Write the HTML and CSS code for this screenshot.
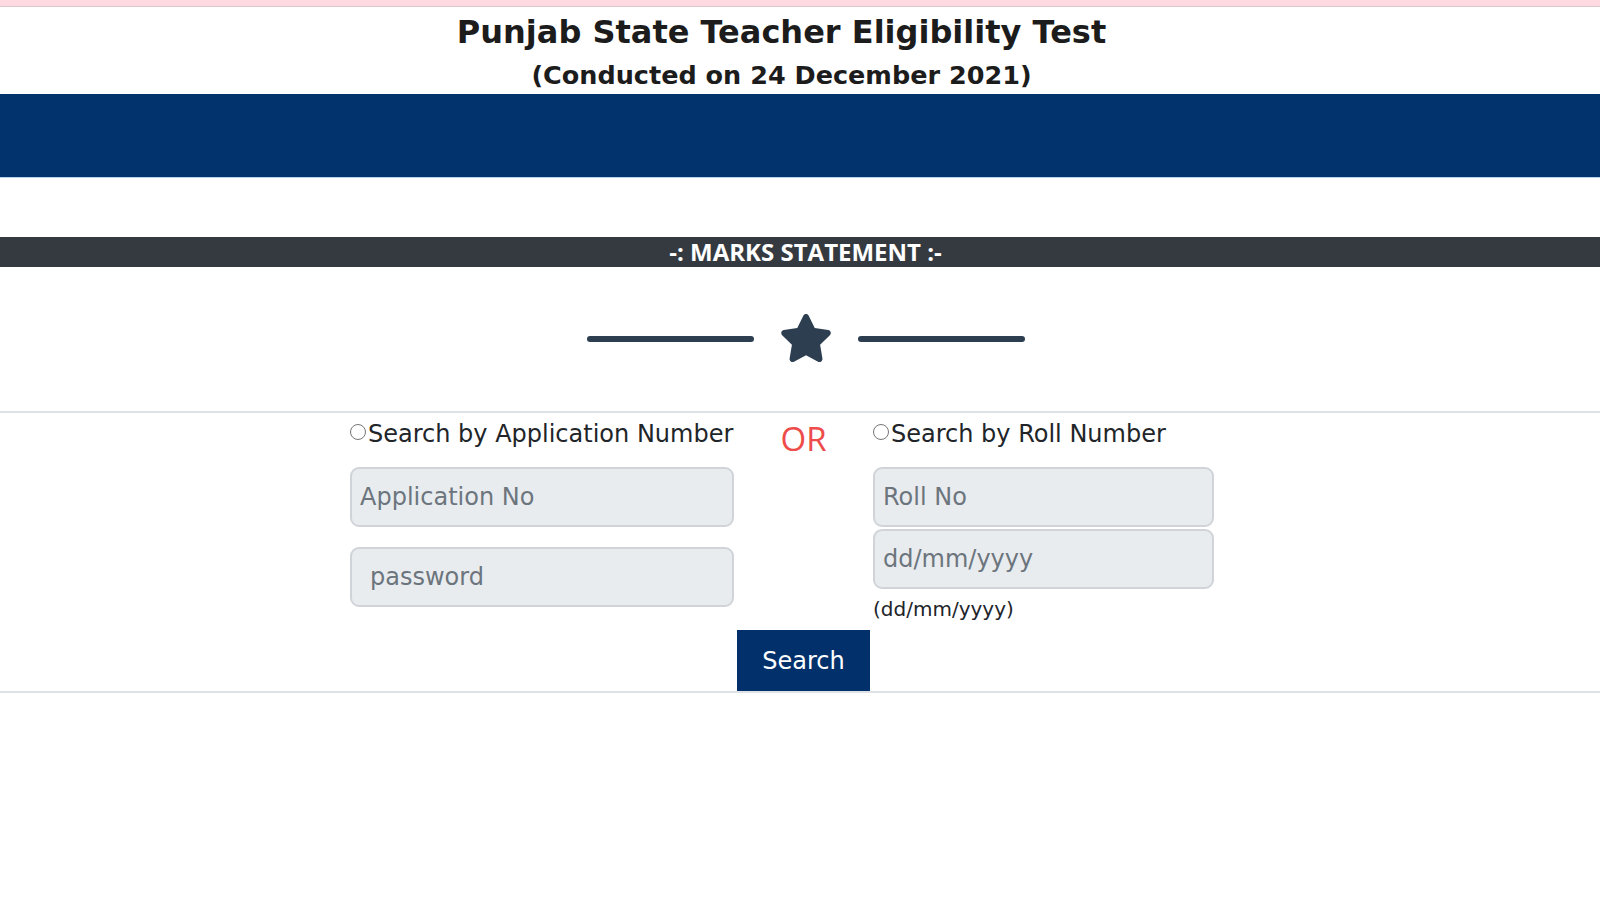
FILE: index.html
```html
<!DOCTYPE html>
<html>
<head>
<meta charset="utf-8" />
<title>Punjab State Teacher Eligibility Test</title>
<link rel="stylesheet" href="styles.css">
</head>
<body>
	<div class="topbar"></div>
	<div class="head">
		<h1>Punjab State Teacher Eligibility Test</h1>
		<p>(Conducted on 24 December 2021)</p>
	</div>
	<div class="banner"></div>

	<div class="section-bar">-: MARKS STATEMENT :-</div>

	<div class="divider">
		<span class="divider-line"></span>
		<svg class="divider-icon" viewBox="0 0 576 512" width="54" height="48">
			<path fill="#2c3e50" d="M316.9 18C311.6 7 300.4 0 288.1 0s-23.4 7-28.8 18L195 150.3 51.4 171.5c-12 1.8-22 10.2-25.7 21.7s-.7 24.2 7.9 32.7L137.8 329 113.2 474.7c-2 12 3 24.2 12.9 31.3s23 8 33.8 2.3l128.3-68.5 128.3 68.5c10.8 5.7 23.9 4.9 33.8-2.3s14.9-19.3 12.9-31.3L438.5 329 542.7 225.9c8.6-8.5 11.7-21.2 7.9-32.7s-13.7-19.9-25.7-21.7L381.2 150.3 316.9 18z"/>
		</svg>
		<span class="divider-line"></span>
	</div>

	<div class="search-box">
		<div class="search-grid">
			<div class="col">
				<label class="choice"><input type="radio" name="by" />Search by Application Number</label>
				<input class="field" type="text" placeholder="Application No" />
				<input class="field field-pass" type="password" placeholder="password" />
			</div>
			<div class="or">OR</div>
			<div class="col">
				<label class="choice"><input type="radio" name="by" />Search by Roll Number</label>
				<input class="field" type="text" placeholder="Roll No" />
				<input class="field field-date" type="text" placeholder="dd/mm/yyyy" />
				<span class="hint">(dd/mm/yyyy)</span>
			</div>
			<div class="btn-cell">
				<button class="btn-search" type="button">Search</button>
			</div>
		</div>
	</div>
</body>
</html>
```

FILE: styles.css
```css
body{
	margin:0;
	padding:0;
	background:#ffffff;
	font-family:"DejaVu Sans", Verdana, sans-serif;
	color:#212529;
}

.topbar{
	height:6px;
	background:#ffd9e1;
	border-bottom:1px solid #dac8cd;
}

.head{
	text-align:center;
	padding-top:6px;
	padding-right:37px;
	height:87px;
	box-sizing:border-box;
}

.head h1{
	margin:0;
	font-size:32px;
	line-height:38px;
	font-weight:bold;
	color:#1c1c1c;
}

.head p{
	margin:9px 0 0 0;
	font-size:25.5px;
	line-height:30px;
	font-weight:bold;
	color:#1c1c1c;
}

.banner{
	height:83px;
	background:#02336d;
	border-bottom:1px solid #b9d3ee;
}

.section-bar{
	margin-top:59px;
	height:30px;
	line-height:30px;
	padding-left:11px;
	background:#343a40;
	color:#ffffff;
	text-align:center;
	font-family:"Open Sans", sans-serif;
	font-weight:bold;
	font-size:24px;
}

.divider{
	height:146px;
	display:flex;
	align-items:center;
	justify-content:center;
	gap:25px;
	padding-left:12px;
	border-bottom:2px solid #dee2e6;
	box-sizing:border-box;
}

.divider-line{
	width:167px;
	height:6px;
	border-radius:4px;
	background:#2c3e50;
}

.divider-icon{
	display:block;
	margin-top:-3px;
}

.search-box{
	border-bottom:2px solid #dee2e6;
}

.search-grid{
	display:grid;
	grid-template-columns:384px 139px 341px;
	margin-left:calc(50% - 450px);
	padding-top:6px;
}

.col{
	display:flex;
	flex-direction:column;
	align-items:flex-start;
}

.choice{
	display:flex;
	align-items:center;
	font-size:24px;
	line-height:30px;
	height:30px;
	white-space:nowrap;
}

.choice input{
	width:16px;
	height:16px;
	margin:0 2px 5px 0;
}

.field{
	box-sizing:border-box;
	width:100%;
	height:60px;
	margin-top:18px;
	padding:0 8px;
	background:#e9ecef;
	border:2px solid #d0d4d8;
	border-radius:9px;
	font-family:"DejaVu Sans", Verdana, sans-serif;
	font-size:24px;
	color:#495057;
}

.field::placeholder{
	color:#6c757d;
}

.field-pass{
	margin-top:20px;
	padding-left:18px;
}

.field-date{
	margin-top:2px;
}

.hint{
	margin-top:8px;
	font-size:20px;
	line-height:24px;
}

.or{
	text-align:center;
	font-family:"Open Sans", sans-serif;
	font-size:33px;
	line-height:40px;
	color:#ee4c4a;
	padding-top:0;
}

.btn-cell{
	grid-column:2;
	display:flex;
	justify-content:center;
	padding-top:9px;
}

.btn-search{
	width:133px;
	height:61px;
	background:#02306b;
	color:#ffffff;
	border:none;
	font-family:"DejaVu Sans", Verdana, sans-serif;
	font-size:24px;
}
```
